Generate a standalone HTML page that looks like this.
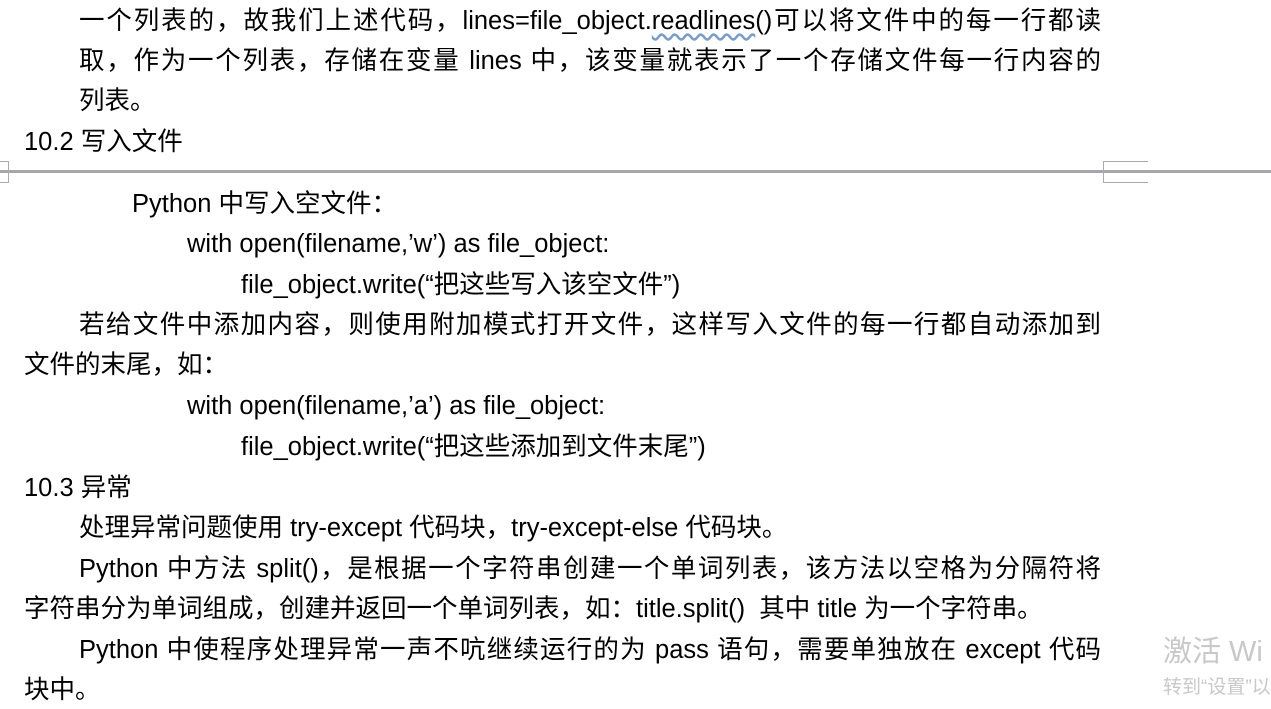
<!DOCTYPE html>
<html><head><meta charset="utf-8"><style>
html,body{margin:0;padding:0;background:#fff;width:1271px;height:709px;overflow:hidden;position:relative}
.l{position:absolute;font-family:"Liberation Sans","Noto Sans CJK SC",sans-serif;font-size:25.5px;line-height:28px;color:#000;white-space:nowrap}
.j{text-align:justify;text-align-last:justify;white-space:normal}
.u{text-decoration:underline wavy #7a9cc9;text-underline-offset:4px}
.wm{position:absolute;font-family:"Liberation Sans","Noto Sans CJK SC",sans-serif;color:#c8c8c8;white-space:nowrap}
</style></head><body>
<div class="l j" style="left:79px;top:7px;width:1022px">一个列表的，故我们上述代码，lines=file_object.<span class="u">readlines</span>()可以将文件中的每一行都读</div>
<div class="l j" style="left:79px;top:47px;width:1022px">取，作为一个列表，存储在变量 lines 中，该变量就表示了一个存储文件每一行内容的</div>
<div class="l" style="left:79px;top:87px">列表。</div>
<div class="l" style="left:24px;top:128px">10.2 写入文件</div>

<div style="position:absolute;left:0;top:170px;width:1271px;height:3px;background:#a4a7ad"></div>
<div style="position:absolute;left:0;top:161px;width:8px;height:20px;border:1px solid #aaa;border-left:none"></div>
<div style="position:absolute;left:1103px;top:161px;width:44px;height:20px;border:1px solid #aaa;border-right:none"></div>

<div class="l" style="left:132px;top:190px">Python 中写入空文件：</div>
<div class="l" style="left:187px;top:230px">with open(filename,’w’) as file_object:</div>
<div class="l" style="left:241px;top:271px">file_object.write(“把这些写入该空文件”)</div>
<div class="l j" style="left:79px;top:311px;width:1022px">若给文件中添加内容，则使用附加模式打开文件，这样写入文件的每一行都自动添加到</div>
<div class="l" style="left:24px;top:351px">文件的末尾，如：</div>
<div class="l" style="left:187px;top:392px">with open(filename,’a’) as file_object:</div>
<div class="l" style="left:241px;top:433px">file_object.write(“把这些添加到文件末尾”)</div>
<div class="l" style="left:24px;top:474px">10.3 异常</div>
<div class="l" style="left:79px;top:514px">处理异常问题使用 try-except 代码块，try-except-else 代码块。</div>
<div class="l j" style="left:79px;top:555px;width:1022px">Python 中方法 split()，是根据一个字符串创建一个单词列表，该方法以空格为分隔符将</div>
<div class="l" style="left:24px;top:595px">字符串分为单词组成，创建并返回一个单词列表，如：title.split() &nbsp;其中 title 为一个字符串。</div>
<div class="l j" style="left:79px;top:636px;width:1022px">Python 中使程序处理异常一声不吭继续运行的为 pass 语句，需要单独放在 except 代码</div>
<div class="l" style="left:24px;top:676px">块中。</div>

<div class="wm" style="left:1163px;top:634px;font-size:29px;line-height:36px">激活 Wi</div>
<div class="wm" style="left:1163px;top:676px;font-size:19px;line-height:24px">转到“设置”以</div>
</body></html>
